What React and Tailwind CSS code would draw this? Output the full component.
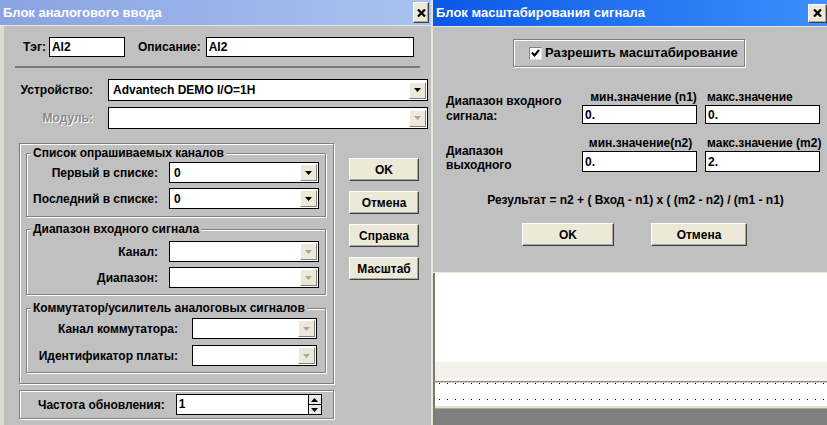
const font = "font-['Liberation_Sans',Arial,sans-serif]";

function CloseBtn({ className }) {
  return (
    <div className={"flex items-center justify-center bg-[#ece9d8] border border-t-white border-l-white border-r-[#404040] border-b-[#404040] shadow-[inset_-1px_-1px_0_#aca899] " + className}>
      <svg width="9" height="8" viewBox="0 0 9 8">
        <path d="M1 0.5 L8 7.5 M8 0.5 L1 7.5" stroke="#000" strokeWidth="2.2" />
      </svg>
    </div>
  )
}

function Btn({ children, className }) {
  return (
    <div className={"h-[23px] flex items-center justify-center bg-[#ece9d8] border border-t-white border-l-white border-r-[#404040] border-b-[#404040] shadow-[inset_-1px_-1px_0_#aca899] " + className}>
      {children}
    </div>
  )
}

function Arrow({ disabled }) {
  return (
    <span className="w-[17px] h-[17px] shrink-0 flex items-center justify-center bg-[#ece9d8] border border-t-white border-l-white border-r-[#808080] border-b-[#808080]">
      <svg width="7" height="4" viewBox="0 0 7 4">
        <path d="M0 0h7L3.5 4z" fill={disabled ? '#aca899' : '#000'} />
      </svg>
    </span>
  )
}

function Select({ value, disabled, className }) {
  return (
    <div className={"h-[21px] bg-white border border-black flex items-center justify-between pl-[4px] pr-[1px] " + className}>
      <span>{value}</span>
      <Arrow disabled={disabled} />
    </div>
  )
}

function Field({ value, className }) {
  return (
    <div className={"bg-white border border-black flex items-center pl-[2px] " + className}>
      {value}
    </div>
  )
}

function Group({ title, children, className }) {
  return (
    <fieldset className={"border border-[#808080] shadow-[inset_1px_1px_0_#fff,1px_1px_0_#fff] " + className}>
      <legend className="ml-[4px] px-[2px] leading-[14px] bg-[#c0c0c0]">{title}</legend>
      {children}
    </fieldset>
  )
}

function Row({ label, children, cols }) {
  return (
    <div className={"grid items-center " + cols}>
      <span className="text-right">{label}</span>
      {children}
    </div>
  )
}

function LeftDialog() {
  return (
    <div className="w-[431px] shrink-0 flex flex-col">
      <div className="h-[26px] flex items-center justify-between pl-[3px] pr-[2px] bg-gradient-to-r from-[#8aa3e2] to-[#a9c3ef] border-b border-[#e8e6dc]">
        <span className="text-white text-[13px] font-bold">Блок аналогового ввода</span>
        <CloseBtn className="w-[16px] h-[21px]" />
      </div>
      <div className="flex-1 border-l-4 border-[#dcdad2] flex flex-col">
        <div className="mt-[11px] flex items-center h-[20px]">
          <span className="ml-[19px]">Тэг:</span>
          <Field value="AI2" className="ml-[3px] w-[76px] h-[20px]" />
          <span className="ml-[13px]">Описание:</span>
          <Field value="AI2" className="ml-[5px] w-[208px] h-[20px]" />
        </div>
        <div className="mt-[9px] ml-[11px] w-[405px] h-[2px] bg-[#7d7a70]" />
        <div className="mt-[11px] ml-[13px] grid grid-cols-[76px_320px] gap-x-[15px] gap-y-[6px] items-center">
          <span className="text-right">Устройство:</span>
          <Select value="Advantech DEMO I/O=1H" className="h-[22px]" />
          <span className="text-right text-[#8a8a8a] [text-shadow:1px_1px_0_#fff]">Модуль:</span>
          <Select value="" disabled className="h-[22px]" />
        </div>
        <div className="mt-[14px] flex">
          <div className="ml-[15px] w-[315px] h-[241px] border border-[#808080] shadow-[inset_1px_1px_0_#fff,1px_1px_0_#fff] pl-[6px] pr-[7px] pt-[2px] flex flex-col">
            <Group title="Список опрашиваемых каналов" className="pt-[2px] pb-[7px] pr-[6px]">
              <div className="flex flex-col gap-[5px]">
                <Row label="Первый в списке:" cols="grid-cols-[1fr_150px] gap-x-[11px]">
                  <Select value="0" />
                </Row>
                <Row label="Последний в списке:" cols="grid-cols-[1fr_150px] gap-x-[11px]">
                  <Select value="0" />
                </Row>
              </div>
            </Group>
            <Group title="Диапазон входного сигнала" className="mt-[5px] pt-[5px] pb-[6px] pr-[6px]">
              <div className="flex flex-col gap-[5px]">
                <Row label="Канал:" cols="grid-cols-[1fr_150px] gap-x-[11px]">
                  <Select value="" disabled />
                </Row>
                <Row label="Диапазон:" cols="grid-cols-[1fr_150px] gap-x-[11px]">
                  <Select value="" disabled />
                </Row>
              </div>
            </Group>
            <Group title="Коммутатор/усилитель аналоговых сигналов" className="mt-[6px] pt-[3px] pb-[6px] pr-[8px]">
              <div className="flex flex-col gap-[6px]">
                <Row label="Канал коммутатора:" cols="grid-cols-[1fr_125px] gap-x-[14px]">
                  <Select value="" disabled />
                </Row>
                <Row label="Идентификатор платы:" cols="grid-cols-[1fr_125px] gap-x-[14px]">
                  <Select value="" disabled />
                </Row>
              </div>
            </Group>
          </div>
          <div className="ml-[15px] pt-[15px] w-[70px] flex flex-col gap-[10px]">
            <Btn>OK</Btn>
            <Btn>Отмена</Btn>
            <Btn>Справка</Btn>
            <Btn>Масштаб</Btn>
          </div>
        </div>
        <div className="mt-[6px] ml-[15px] w-[315px] h-[29px] border border-[#808080] shadow-[inset_1px_1px_0_#fff,1px_1px_0_#fff] flex items-center">
          <span className="ml-[18px]">Частота обновления:</span>
          <div className="ml-[11px] w-[146px] h-[21px] bg-white border border-black flex items-stretch justify-between pl-[2px]">
            <span className="leading-[19px]">1</span>
            <div className="w-[13px] flex flex-col border-l border-black bg-[#e8e8e8]">
              <div className="flex-1 flex items-center justify-center border-b border-black">
                <svg width="7" height="4" viewBox="0 0 7 4"><path d="M0 4h7L3.5 0z" fill="#000" /></svg>
              </div>
              <div className="flex-1 flex items-center justify-center">
                <svg width="7" height="4" viewBox="0 0 7 4"><path d="M0 0h7L3.5 4z" fill="#000" /></svg>
              </div>
            </div>
          </div>
        </div>
      </div>
    </div>
  )
}

function RightDialog() {
  return (
    <div className="h-[272px] flex flex-col">
      <div className="h-[27px] flex items-center justify-between pl-[3px] bg-gradient-to-r from-[#0a58e6] to-[#3d8ffc] border-b border-[#e8e6dc]">
        <span className="text-white text-[13px] font-bold">Блок масштабирования сигнала</span>
        <CloseBtn className="w-[19px] h-[19px]" />
      </div>
      <div className="flex-1 flex flex-col">
        <div className="mt-[12px] ml-[80px] w-[232px] h-[28px] border border-[#808080] shadow-[inset_1px_1px_0_#fff,1px_1px_0_#fff] flex items-center">
          <span className="ml-[15px] w-[13px] h-[13px] bg-white border border-t-[#808080] border-l-[#808080] border-r-[#e0e0e0] border-b-[#e0e0e0] flex items-center justify-center">
            <svg width="9" height="8" viewBox="0 0 9 8">
              <path d="M1 3.5 L3.5 6.5 L8 1" stroke="#000" strokeWidth="2" fill="none" />
            </svg>
          </span>
          <span className="ml-[3px] text-[13px]">Разрешить масштабирование</span>
        </div>
        <div className="mt-[23px] ml-[13px] grid grid-cols-[128px_115px_115px] gap-x-[8px] gap-y-[1px]">
          <div className="row-span-2 self-end leading-[15px]">Диапазон входного<br />сигнала:</div>
          <div className="text-center pl-[8px] leading-[14px]">мин.значение (n1)</div>
          <div className="pl-[2px] leading-[14px]">макс.значение</div>
          <Field value="0." className="h-[19px]" />
          <Field value="0." className="h-[19px]" />
        </div>
        <div className="mt-[12px] ml-[13px] grid grid-cols-[128px_115px_115px] gap-x-[8px] gap-y-[1px]">
          <div className="row-span-2 self-end leading-[14px]">Диапазон<br />выходного</div>
          <div className="text-center pl-[2px] leading-[14px]">мин.значение(n2)</div>
          <div className="pl-[2px] leading-[14px] whitespace-nowrap">макс.значение (m2)</div>
          <Field value="0." className="h-[21px]" />
          <Field value="2." className="h-[21px]" />
        </div>
        <div className="mt-[21px] pl-[11px] text-center leading-[14px]">
          Результат = n2 + ( Вход - n1) x ( (m2 - n2) / (m1 - n1)
        </div>
        <div className="mt-[16px] ml-[89px] flex gap-[37px]">
          <Btn className="w-[92px]">OK</Btn>
          <Btn className="w-[96px]">Отмена</Btn>
        </div>
      </div>
    </div>
  )
}

function BackWindow() {
  return (
    <div className="flex-1 flex flex-col border-t border-[#ece9d8]">
      <div className="flex-1 flex flex-col border-l-2 border-[#7d7a70]">
        <div className="h-[89px] bg-white" />
        <div className="h-[19px] bg-[#f4f2ea]" />
        <div className="h-[2px] bg-[#8a877c] border-b border-[#d4d0c8]" />
        <svg className="block w-full h-[23px] bg-white" height="23">
          <defs>
            <pattern id="dots" width="8" height="16" patternUnits="userSpaceOnUse">
              <rect x="4" y="0" width="1" height="1" fill="#000" />
            </pattern>
          </defs>
          <rect width="100%" height="23" fill="url(#dots)" />
        </svg>
        <div className="h-[3px] bg-[#e4e1d6] border-b border-[#aca899]" />
        <div className="flex-1 bg-[#808080]" />
      </div>
    </div>
  )
}

export default function App() {
  return (
    <div className={"w-[827px] h-[425px] overflow-hidden flex bg-[#c0c0c0] text-black text-[12px] font-bold leading-[14px] " + font}>
      <LeftDialog />
      <div className="flex-1 flex flex-col border-l-2 border-[#e8e6dc]">
        <RightDialog />
        <BackWindow />
      </div>
    </div>
  )
}
